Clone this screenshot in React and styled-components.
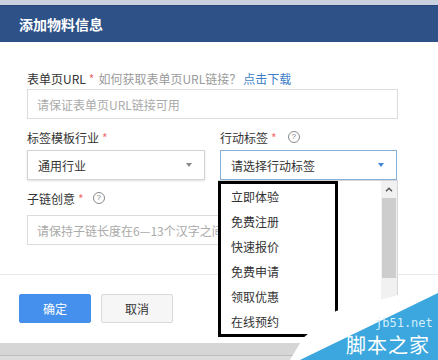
import React from 'react';
import styled, { createGlobalStyle } from 'styled-components';

const GlobalStyle = createGlobalStyle`
  html, body {
    margin: 0;
    padding: 0;
  }
  body {
    font-family: "Noto Sans CJK SC", "Liberation Sans", sans-serif;
    background: #d6d6d6;
  }
`;

const Screen = styled.div`
  position: relative;
  width: 438px;
  height: 360px;
  overflow: hidden;
  display: flex;
  flex-direction: column;
  background: #d6d6d6;
`;

const TopStrip = styled.div`
  height: 5px;
  background: #c9d2de;
`;

const Modal = styled.div`
  height: 338px;
  background: #fff;
  display: flex;
  flex-direction: column;
`;

const Header = styled.div`
  height: 37px;
  box-sizing: border-box;
  border-top: 1px solid #24467a;
  background: #2e5287;
  display: flex;
  align-items: center;
  padding-left: 19px;
  color: #fff;
  font-size: 14px;
  font-weight: 700;
`;

const Body = styled.div`
  padding: 27px 40px 29px 27px;
`;

const Field = styled.div`
  margin-top: ${(p) => p.$top || 0}px;
`;

const Label = styled.div`
  display: flex;
  align-items: center;
  height: 18px;
  margin-bottom: ${(p) => p.$gap}px;
  font-size: 12px;
  color: #333;
  white-space: nowrap;
`;

const Star = styled.span`
  color: #f07070;
  margin: 0 4px 0 3px;
`;

const Hint = styled.span`
  color: #9a9a9a;
`;

const Link = styled.a`
  color: #3d7fc7;
  margin-left: 2px;
  text-decoration: none;
`;

const Help = styled.span`
  width: 10px;
  height: 10px;
  margin-left: ${(p) => p.$gap}px;
  border: 1px solid #8a8a8a;
  border-radius: 50%;
  color: #7a7a7a;
  font-size: 8px;
  line-height: 10px;
  text-align: center;
  font-family: "Liberation Sans", sans-serif;
`;

const TextInput = styled.input`
  display: block;
  width: 100%;
  height: 30px;
  box-sizing: border-box;
  border: 1px solid #dcdcdc;
  padding: 0 9px;
  font-family: inherit;
  font-size: 12px;
  color: #333;
  outline: none;
  &::placeholder {
    color: #aaa;
  }
`;

const Row = styled.div`
  display: grid;
  grid-template-columns: 178px 177px;
  column-gap: 15px;
`;

const SelectWrap = styled.div`
  position: relative;
`;

const Select = styled.div`
  height: 30px;
  box-sizing: border-box;
  display: flex;
  align-items: center;
  justify-content: space-between;
  padding: 0 12px 0 10px;
  border: 1px solid ${(p) => (p.$active ? '#86aed8' : '#d4d4d4')};
  box-shadow: ${(p) => (p.$active ? 'none' : '0 1px 2px rgba(0,0,0,0.12)')};
  background: #fff;
  font-size: 12px;
  color: #333;
`;

const Caret = styled.span`
  width: 0;
  height: 0;
  border-left: 3.5px solid transparent;
  border-right: 3.5px solid transparent;
  border-top: 4px solid ${(p) => (p.$active ? '#3f86d6' : '#8a8a8a')};
`;

const Dropdown = styled.div`
  position: absolute;
  top: 100%;
  left: -2px;
  width: 180px;
  height: 155px;
  box-sizing: border-box;
  border: 1px solid #d6d6d6;
  background: #fff;
  overflow: hidden;
  z-index: 2;
`;

const Option = styled.div`
  height: 25px;
  line-height: 25px;
  padding-left: 12px;
  font-size: 12px;
  color: #333;
  &:first-child {
    margin-top: 3px;
  }
`;

const ScrollTrack = styled.div`
  position: absolute;
  top: 0;
  right: 0;
  bottom: 0;
  width: 16px;
  background: #f1f1f1;
  display: flex;
  flex-direction: column;
  align-items: center;
`;

const ScrollArrow = styled.div`
  height: 17px;
  display: flex;
  align-items: center;
  justify-content: center;
`;

const ScrollThumb = styled.div`
  width: 14px;
  height: 80px;
  background: #cdcdcd;
`;

const Annotation = styled.div`
  position: absolute;
  top: calc(100% + 1px);
  left: -2px;
  width: 120px;
  height: 156px;
  box-sizing: border-box;
  border: 3px solid #000;
  z-index: 3;
  pointer-events: none;
`;

const Footer = styled.div`
  flex: 1;
  border-top: 1px solid #ebebeb;
  padding: 19px 0 0 19px;
  display: flex;
  gap: 10px;
  align-items: flex-start;
`;

const Button = styled.button`
  width: 72px;
  height: 29px;
  border-radius: 2px;
  border: 1px solid ${(p) => (p.$primary ? '#4590ec' : '#d9d9d9')};
  background: ${(p) => (p.$primary ? '#4590ec' : '#f6f6f6')};
  color: ${(p) => (p.$primary ? '#fff' : '#333')};
  font-family: inherit;
  font-size: 12px;
  padding: 0;
`;

const BottomBar = styled.div`
  flex: 1;
  background: linear-gradient(#d6d6d6 0 12px, #bdbdbd 12px 13px, #dcdcdc 13px);
`;

const Watermark = styled.div`
  position: absolute;
  right: 0;
  bottom: 0;
  width: 160px;
  height: 110px;
  z-index: 5;
  pointer-events: none;
`;

const Glow = styled.div`
  position: absolute;
  inset: 0;
  background: #fff;
  clip-path: polygon(12px 110px, 25px 88px, 58px 61px, 117px 46px, 160px 30px, 160px 43px, 22px 110px);
`;

const Ribbon = styled.div`
  position: absolute;
  inset: 0;
  background: #3ba7de;
  clip-path: polygon(22px 110px, 160px 43px, 160px 110px);
`;

const MarkSite = styled.span`
  position: absolute;
  left: 97px;
  top: 66px;
  font-family: "DejaVu Sans Mono", monospace;
  font-size: 12px;
  line-height: 14px;
  color: #d4eefb;
`;

const MarkName = styled.span`
  position: absolute;
  left: 68px;
  top: 84px;
  font-size: 20px;
  line-height: 22px;
  letter-spacing: 1px;
  color: #fff;
  white-space: nowrap;
`;

const options = ['立即体验', '免费注册', '快速报价', '免费申请', '领取优惠', '在线预约'];

const App = () => (
  <Screen>
    <GlobalStyle />
    <TopStrip />
    <Modal>
      <Header>添加物料信息</Header>
      <Body>
        <Field>
          <Label $gap={2}>
            表单页URL
            <Star>*</Star>
            <Hint>如何获取表单页URL链接？</Hint>
            <Link>点击下载</Link>
          </Label>
          <TextInput placeholder="请保证表单页URL链接可用" />
        </Field>
        <Field $top={9}>
          <Row>
            <div>
              <Label $gap={4}>
                标签模板行业
                <Star>*</Star>
              </Label>
              <Select>
                通用行业
                <Caret />
              </Select>
            </div>
            <div>
              <Label $gap={4}>
                行动标签
                <Star>*</Star>
                <Help $gap={7}>?</Help>
              </Label>
              <SelectWrap>
                <Select $active>
                  请选择行动标签
                  <Caret $active />
                </Select>
                <Dropdown>
                  {options.map((o) => (
                    <Option key={o}>{o}</Option>
                  ))}
                  <ScrollTrack>
                    <ScrollArrow>
                      <svg width="8" height="5" viewBox="0 0 8 5">
                        <path d="M1 4.2 L4 1.2 L7 4.2" fill="none" stroke="#505050" strokeWidth="1.4" />
                      </svg>
                    </ScrollArrow>
                    <ScrollThumb />
                  </ScrollTrack>
                </Dropdown>
                <Annotation />
              </SelectWrap>
            </div>
          </Row>
        </Field>
        <Field $top={9}>
          <Label $gap={8}>
            子链创意
            <Star>*</Star>
            <Help $gap={5}>?</Help>
          </Label>
          <TextInput placeholder="请保持子链长度在6—13个汉字之间" />
        </Field>
      </Body>
      <Footer>
        <Button $primary>确定</Button>
        <Button>取消</Button>
      </Footer>
    </Modal>
    <BottomBar />
    <Watermark>
      <Glow />
      <Ribbon />
      <MarkSite>jb51.net</MarkSite>
      <MarkName>脚本之家</MarkName>
    </Watermark>
  </Screen>
);

export default App;
